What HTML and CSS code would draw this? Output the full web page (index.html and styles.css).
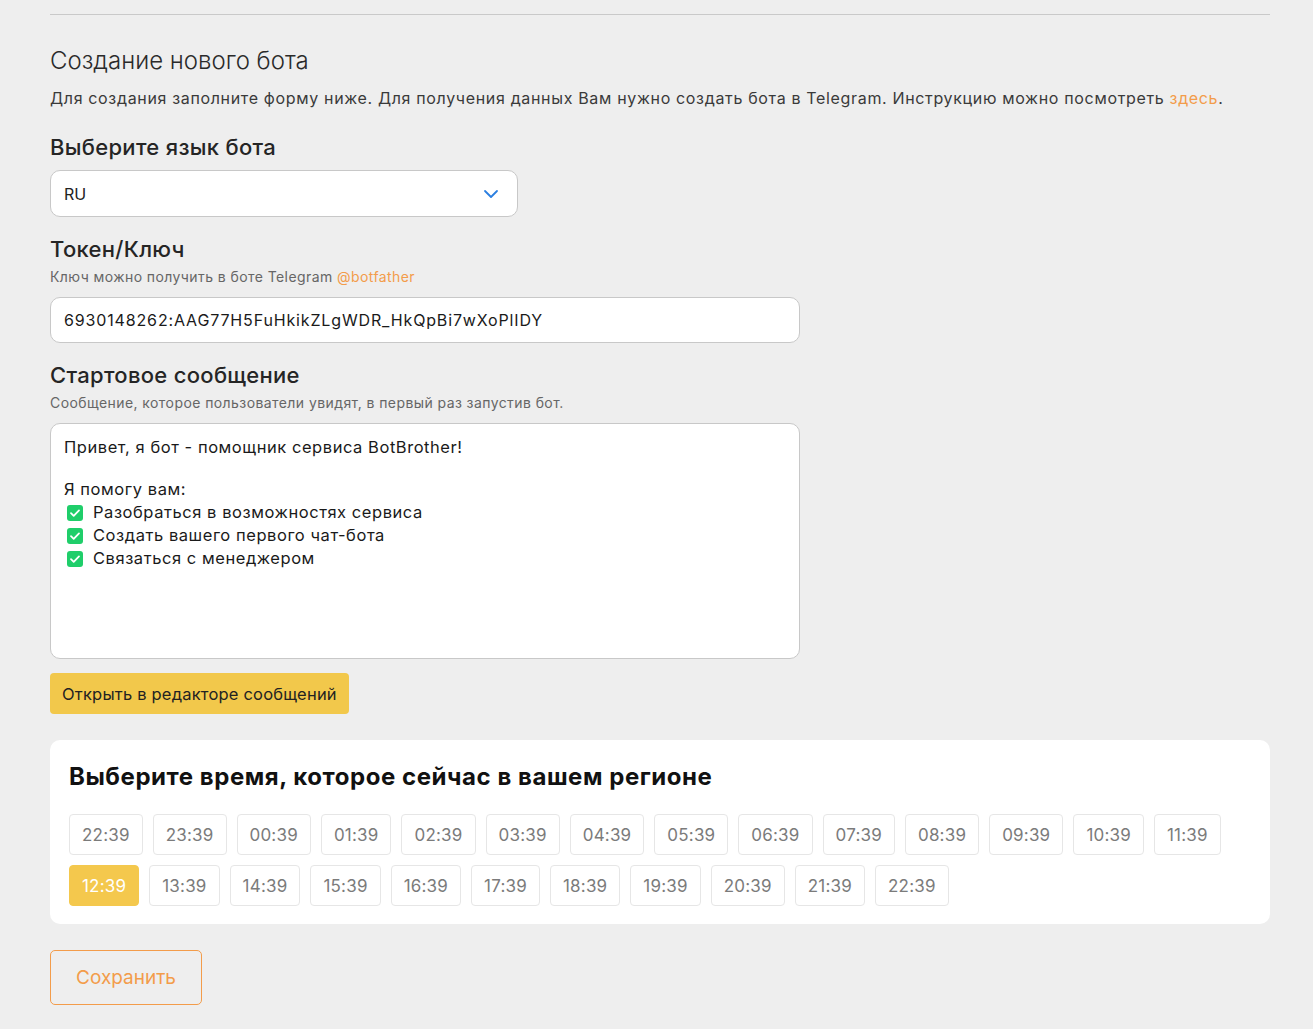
FILE: index.html
```html
<!DOCTYPE html>
<html lang="ru">
<head>
    <meta charset="UTF-8">
    <meta name="viewport" content="width=device-width, initial-scale=1.0">
    <title>Создание нового бота</title>
    <link rel="stylesheet" href="styles.css">
</head>
<body>
    <div class="page">
        <hr class="divider">

        <h2 class="page-title">Создание нового бота</h2>
        <p class="page-desc">Для создания заполните форму ниже. Для получения данных Вам нужно создать бота в Telegram. Инструкцию можно посмотреть <a href="#" class="link">здесь</a>.</p>

        <h3 class="field-label">Выберите язык бота</h3>
        <div class="select">
            <span>RU</span>
            <svg class="chevron" width="16" height="10" viewBox="0 0 16 10"><path d="M2 2l6 6 6-6" fill="none" stroke="#2b7fe0" stroke-width="1.8" stroke-linecap="round" stroke-linejoin="round"/></svg>
        </div>

        <h3 class="field-label">Токен/Ключ</h3>
        <p class="field-hint">Ключ можно получить в боте Telegram <a href="#" class="link">@botfather</a></p>
        <div class="input">6930148262:AAG77H5FuHkikZLgWDR_HkQpBi7wXoPlIDY</div>

        <h3 class="field-label">Стартовое сообщение</h3>
        <p class="field-hint">Сообщение, которое пользователи увидят, в первый раз запустив бот.</p>
        <div class="textarea">
            <div>Привет, я бот - помощник сервиса BotBrother!</div>
            <div class="blank"></div>
            <div>Я помогу вам:</div>
            <div class="check-line"><svg class="check" width="18" height="18" viewBox="0 0 18 18"><rect x="1" y="1" width="16" height="16" rx="3" fill="#1fce6a"/><path d="M5 9.2l2.7 2.6L13 6.4" fill="none" stroke="#fff" stroke-width="1.8" stroke-linecap="round" stroke-linejoin="round"/></svg>Разобраться в возможностях сервиса</div>
            <div class="check-line"><svg class="check" width="18" height="18" viewBox="0 0 18 18"><rect x="1" y="1" width="16" height="16" rx="3" fill="#1fce6a"/><path d="M5 9.2l2.7 2.6L13 6.4" fill="none" stroke="#fff" stroke-width="1.8" stroke-linecap="round" stroke-linejoin="round"/></svg>Создать вашего первого чат-бота</div>
            <div class="check-line"><svg class="check" width="18" height="18" viewBox="0 0 18 18"><rect x="1" y="1" width="16" height="16" rx="3" fill="#1fce6a"/><path d="M5 9.2l2.7 2.6L13 6.4" fill="none" stroke="#fff" stroke-width="1.8" stroke-linecap="round" stroke-linejoin="round"/></svg>Связаться с менеджером</div>
        </div>
        <button class="editor-btn">Открыть в редакторе сообщений</button>

        <div class="card">
            <h3 class="card-title">Выберите время, которое сейчас в вашем регионе</h3>
            <div class="times">
                <button class="time">22:39</button>
                <button class="time">23:39</button>
                <button class="time">00:39</button>
                <button class="time">01:39</button>
                <button class="time">02:39</button>
                <button class="time">03:39</button>
                <button class="time">04:39</button>
                <button class="time">05:39</button>
                <button class="time">06:39</button>
                <button class="time">07:39</button>
                <button class="time">08:39</button>
                <button class="time">09:39</button>
                <button class="time">10:39</button>
                <button class="time">11:39</button>
                <button class="time active">12:39</button>
                <button class="time">13:39</button>
                <button class="time">14:39</button>
                <button class="time">15:39</button>
                <button class="time">16:39</button>
                <button class="time">17:39</button>
                <button class="time">18:39</button>
                <button class="time">19:39</button>
                <button class="time">20:39</button>
                <button class="time">21:39</button>
                <button class="time">22:39</button>
            </div>
        </div>

        <button class="save-btn">Сохранить</button>
    </div>
</body>
</html>
```

FILE: styles.css
```css
* {
    margin: 0;
    padding: 0;
    box-sizing: border-box;
}

body {
    font-family: 'Inter', 'Noto Sans', sans-serif;
    background: #eeeeee;
    color: #222222;
}

.page {
    padding: 14px 43px 25px 50px;
}

.divider {
    border: none;
    border-top: 1px solid #c9c9c9;
}

.page-title {
    margin-top: 31px;
    font-size: 24px;
    line-height: 30px;
    font-weight: 300;
    color: #2a2a2a;
}

.page-desc {
    margin-top: 10px;
    font-size: 16px;
    line-height: 24px;
    font-weight: 400;
    color: #3a3a3a;
    letter-spacing: 0.66px;
}

.link {
    color: #f39c4a;
    text-decoration: none;
}

.field-label {
    margin-top: 23px;
    font-size: 22px;
    line-height: 28px;
    font-weight: 500;
    color: #252525;
    letter-spacing: 0.3px;
}

.select + .field-label,
.input + .field-label {
    margin-top: 18px;
}

.field-hint {
    margin-top: 4px;
    font-size: 14px;
    line-height: 20px;
    color: #666666;
    letter-spacing: 0.42px;
}

.select {
    margin-top: 9px;
    width: 468px;
    height: 47px;
    background: #ffffff;
    border: 1px solid #c8c8c8;
    border-radius: 10px;
    display: flex;
    align-items: center;
    justify-content: space-between;
    padding: 0 18px 0 13px;
    font-size: 16px;
    color: #222222;
}

.input {
    margin-top: 10px;
    width: 750px;
    height: 46px;
    background: #ffffff;
    border: 1px solid #c8c8c8;
    border-radius: 10px;
    display: flex;
    align-items: center;
    padding: 0 13px;
    font-size: 16px;
    letter-spacing: 0.85px;
    color: #1a1a1a;
}

.textarea {
    margin-top: 10px;
    width: 750px;
    height: 236px;
    background: #ffffff;
    border: 1px solid #c8c8c8;
    border-radius: 10px;
    padding: 12px 13px 10px 13px;
    font-size: 16.5px;
    line-height: 23px;
    letter-spacing: 0.55px;
    color: #1a1a1a;
}

.blank {
    height: 19px;
}

.check-line {
    display: flex;
    align-items: center;
}

.check {
    margin: 0 9px 0 2px;
}

.editor-btn {
    margin-top: 14px;
    height: 41px;
    padding: 0 12px;
    background: #f2c84b;
    border: none;
    border-radius: 4px;
    font-family: inherit;
    font-size: 16.5px;
    letter-spacing: 0.2px;
    color: #222222;
    cursor: pointer;
}

.card {
    margin-top: 26px;
    background: #ffffff;
    border-radius: 10px;
    padding: 22px 19px 18px 19px;
}

.card-title {
    font-size: 24px;
    line-height: 30px;
    font-weight: 700;
    color: #111111;
    letter-spacing: 0.55px;
}

.times {
    margin-top: 22px;
    display: flex;
    flex-wrap: wrap;
    gap: 10px;
}

.time {
    height: 41px;
    padding: 0 12px;
    background: #ffffff;
    border: 1px solid #e6e6e6;
    border-radius: 4px;
    font-family: inherit;
    font-size: 17px;
    letter-spacing: 0.2px;
    color: #7b7b7b;
    cursor: pointer;
}

.time.active {
    background: #f4c84d;
    border-color: #f4c84d;
    color: #ffffff;
}

.save-btn {
    margin-top: 26px;
    width: 152px;
    height: 55px;
    background: transparent;
    border: 1px solid #f39c4a;
    border-radius: 5px;
    font-family: inherit;
    font-size: 19px;
    color: #f39c4a;
    cursor: pointer;
}
```
